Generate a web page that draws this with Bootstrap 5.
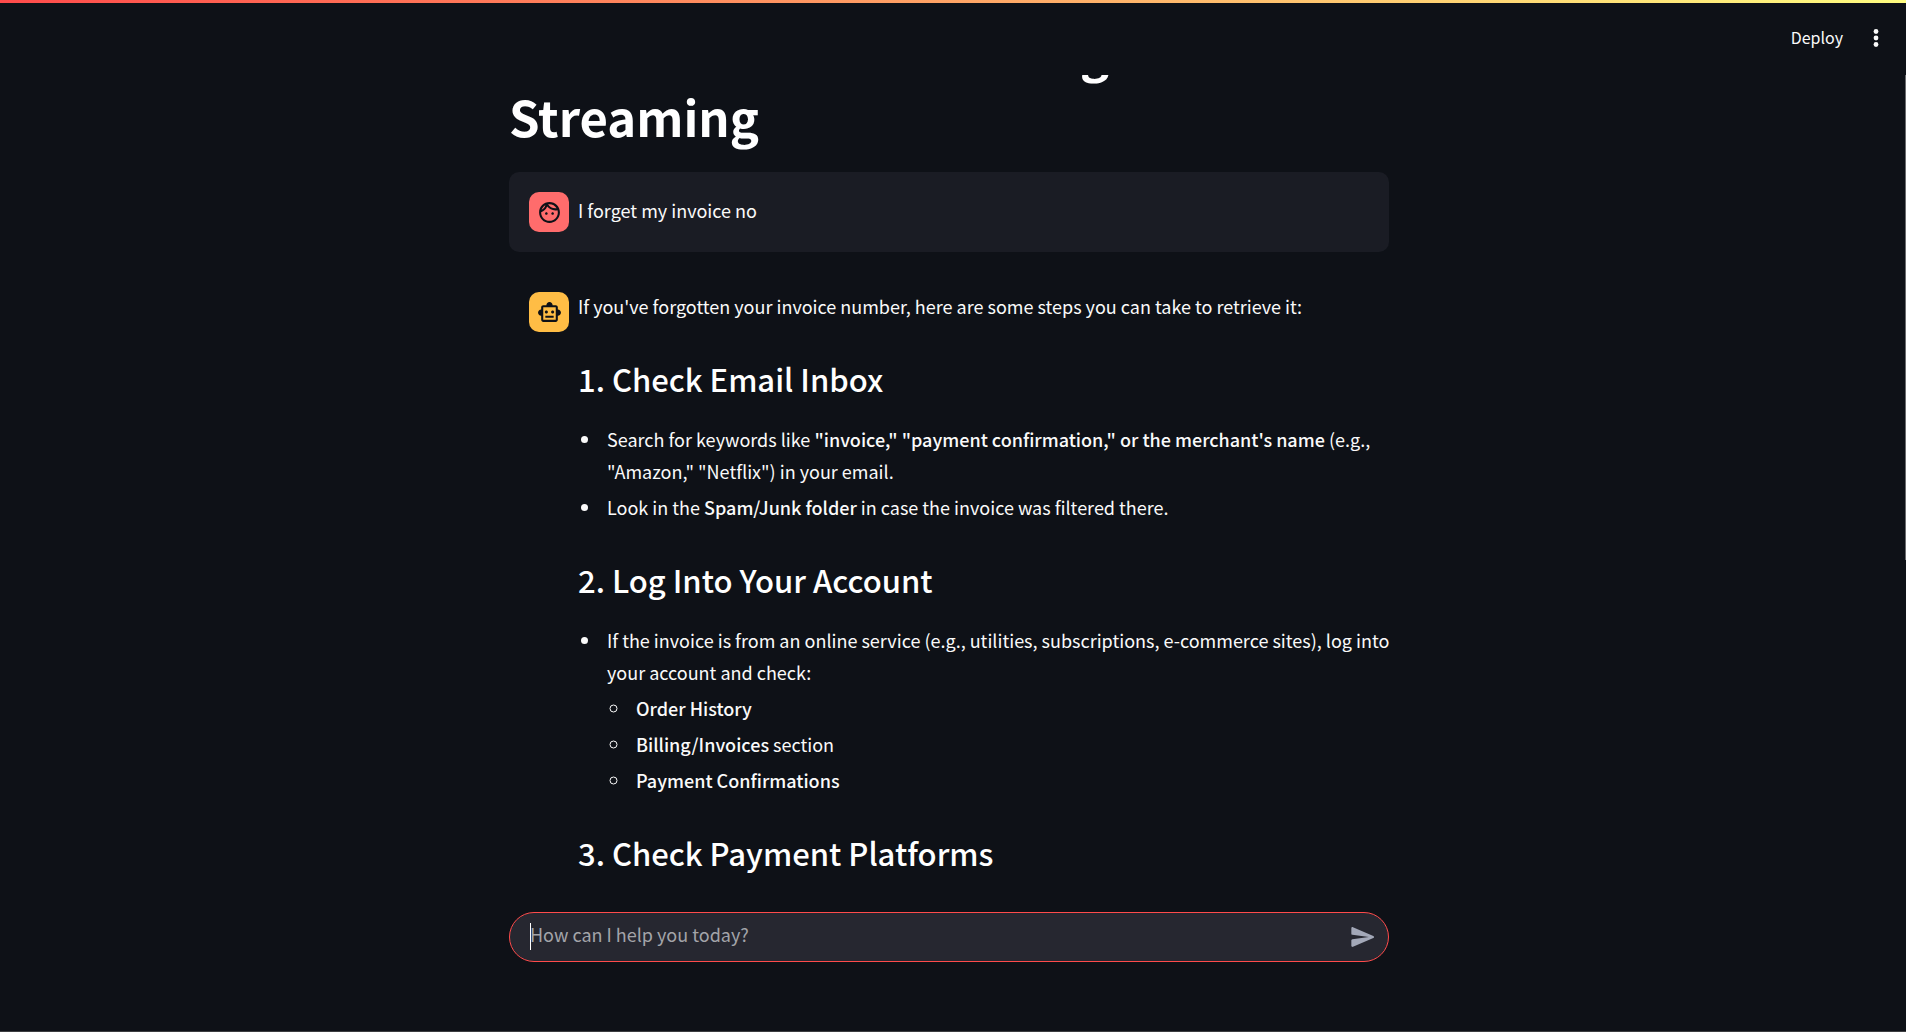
<!DOCTYPE html>
<html lang="en" data-bs-theme="dark">
<head>
<meta charset="utf-8">
<meta name="viewport" content="width=device-width, initial-scale=1">
<title>Chatbot Streaming</title>
<link href="https://cdn.jsdelivr.net/npm/bootstrap@5.3.0/dist/css/bootstrap.min.css" rel="stylesheet">
<style>
:root { --ink: #fafafa; --page: #0e1117; --accent: #ff4b4b; }
body { background: var(--page); color: var(--ink); font: 400 18px/32px "Noto Sans CJK SC", "Noto Sans", sans-serif; border-bottom: 1px solid #3c3d40; }
.rainbow { height: 3px; background: linear-gradient(90deg, #ff4b4b, #fffd80); }
.topbar { height: 72px; padding: 0 15px 4px 20px; }
.topbar .btn { color: var(--ink); font-size: 16px; line-height: 24px; border: 0; padding: 4px 16px; }
.topbar .btn-dots { padding: 4px 2px 4px 4px; }
.column { width: 100%; max-width: 880px; }
.viewport { padding-right: 8px; min-height: 0; }
.app-title { font-size: 49px; line-height: 66px; font-weight: 700; margin: 0; padding: 0 0 23px; }
.message { padding: 20px; gap: 9px; border-radius: 10px; }
.message.from-user { background: #1a1c24; margin-bottom: 20px; }
.message.from-bot { padding: 20px 0 0 20px; }
.avatar { width: 40px; height: 40px; border-radius: 10px; color: var(--page); }
.avatar-user { background: #ff6c6c; }
.avatar-bot { background: #ffbd45; }
.message-body { margin: -2px -8px 0 0; }
.message-body h3 { font-size: 31px; line-height: 42px; font-weight: 500; margin: 0; padding: 32px 0 23px; }
.message-body p { margin: 0 0 4px; }
.message-body strong { font-weight: 500; }
.message-body ul { padding-left: 24px; margin: 0; }
.message-body li { margin-bottom: 4px; padding-left: 5px; }
.composer-wrap { padding: 15px 8px 69px 0; }
.composer { height: 50px; border: 1px solid var(--accent); border-radius: 25px; background: #262730; padding: 0 11px 0 20px; }
.composer input { background: none; border: 0; outline: 0; color: var(--ink); font-size: 18px; line-height: 32px; padding: 0 0 6px; height: 44px; }
.composer input::placeholder { color: #a3a4a9; opacity: 1; }
.composer .btn { color: #a3a8b8; padding: 0; border: 0; line-height: 0; }
.caret { left: 20px; top: 10px; width: 1px; height: 27px; background: #fff; }
.scroll-thumb { right: 0; top: 75px; width: 1px; height: 47%; background: #6b6c6f; }
</style>
</head>
<body class="vh-100 d-flex flex-column overflow-hidden position-relative">
<div class="rainbow flex-shrink-0"></div>
<header class="topbar d-flex justify-content-end align-items-center flex-shrink-0">
  <button type="button" class="btn">Deploy</button>
  <button type="button" class="btn btn-dots" aria-label="Main menu">
    <svg width="26" height="24" viewBox="0 0 26 24" fill="currentColor" aria-hidden="true"><circle cx="13" cy="5.5" r="2.4"/><circle cx="13" cy="12" r="2.4"/><circle cx="13" cy="18.5" r="2.4"/></svg>
  </button>
</header>

<main class="viewport flex-grow-1 overflow-hidden d-flex flex-column justify-content-end align-items-center">
  <div class="column">
    <h1 class="app-title">Mobile Service with LangChain Streaming</h1>

    <article class="message from-user d-flex">
      <div class="avatar avatar-user d-flex align-items-center justify-content-center flex-shrink-0">
        <svg width="25" height="25" viewBox="0 0 24 24" fill="currentColor" aria-hidden="true"><path d="M10.25 13c0 .69-.56 1.25-1.25 1.25S7.750 13.690 7.750 13s.56-1.250 1.250-1.250 1.250.56 1.250 1.250zM15 11.750c-.69 0-1.250.56-1.250 1.250s.56 1.250 1.250 1.250 1.250-.56 1.250-1.250-.56-1.250-1.250-1.250zm7 .25c0 5.520-4.480 10-10 10S2 17.520 2 12 6.480 2 12 2s10 4.480 10 10zM10.660 4.120C12.060 6.440 14.600 8 17.500 8c.46 0 .91-.05 1.340-.12C17.440 5.560 14.900 4 12 4c-.46 0-.91.05-1.340.12zM4.420 9.470c1.710-.97 3.030-2.550 3.660-4.440C6.370 6 5.050 7.580 4.420 9.470zM20 12c0-.78-.12-1.530-.33-2.240-.7.15-1.420.24-2.170.24-3.130 0-5.920-1.440-7.760-3.690C8.690 8.870 6.600 10.880 4 11.860c.01.04 0 .09 0 .14 0 4.410 3.590 8 8 8s8-3.590 8-8z"/></svg>
      </div>
      <div class="message-body"><p class="pt-1 mb-0">I forget my invoice no</p></div>
    </article>

    <article class="message from-bot d-flex">
      <div class="avatar avatar-bot d-flex align-items-center justify-content-center flex-shrink-0">
        <svg width="25" height="25" viewBox="0 0 24 24" fill="currentColor" aria-hidden="true"><path d="M20 9V7c0-1.100-.9-2-2-2h-3c0-1.660-1.340-3-3-3S9 3.340 9 5H6c-1.100 0-2 .9-2 2v2c-1.660 0-3 1.340-3 3s1.340 3 3 3v4c0 1.100.9 2 2 2h12c1.100 0 2-.9 2-2v-4c1.660 0 3-1.340 3-3s-1.340-3-3-3zm-2 10H6V7h12v12zM9 13c.83 0 1.500-.67 1.500-1.500S9.830 10 9 10s-1.500.67-1.500 1.500S8.170 13 9 13zm6 0c.83 0 1.500-.67 1.500-1.500S15.830 10 15 10s-1.500.67-1.500 1.500.67 1.500 1.500 1.500zM8 15h8v2H8v-2z"/></svg>
      </div>
      <div class="message-body flex-grow-1">
        <p>If you've forgotten your invoice number, here are some steps you can take to retrieve it:</p>
        <h3>1. Check Email Inbox</h3>
        <ul>
          <li>Search for keywords like <strong>"invoice," "payment confirmation," or the merchant's name</strong> (e.g., "Amazon," "Netflix") in your email.</li>
          <li>Look in the <strong>Spam/Junk folder</strong> in case the invoice was filtered there.</li>
        </ul>
        <h3>2. Log Into Your Account</h3>
        <ul>
          <li>If the invoice is from an online service (e.g., utilities, subscriptions, e-commerce sites), log into your account and check:
            <ul class="mt-1">
              <li><strong>Order History</strong></li>
              <li><strong>Billing/Invoices</strong> section</li>
              <li><strong>Payment Confirmations</strong></li>
            </ul>
          </li>
        </ul>
        <h3>3. Check Payment Platforms</h3>
      </div>
    </article>
  </div>
</main>

<footer class="composer-wrap d-flex justify-content-center flex-shrink-0">
  <form class="composer column d-flex align-items-center position-relative">
    <input type="text" class="flex-grow-1" placeholder="How can I help you today?" aria-label="How can I help you today?">
    <span class="caret position-absolute"></span>
    <button type="button" class="btn" aria-label="Send message">
      <svg width="28" height="28" viewBox="0 0 24 24" fill="currentColor" aria-hidden="true"><path d="M3.400 20.400l17.450-7.480c.81-.35.81-1.490 0-1.840L3.400 3.600c-.66-.29-1.390.2-1.390.91L2 9.120c0 .5.37.93.87.99L17 12 2.870 13.880c-.5.07-.87.5-.87 1v4.610c0 .71.73 1.200 1.400.91z"/></svg>
    </button>
  </form>
</footer>
<div class="scroll-thumb position-absolute"></div>
<script src="https://cdn.jsdelivr.net/npm/bootstrap@5.3.0/dist/js/bootstrap.bundle.min.js"></script>
</body>
</html>
